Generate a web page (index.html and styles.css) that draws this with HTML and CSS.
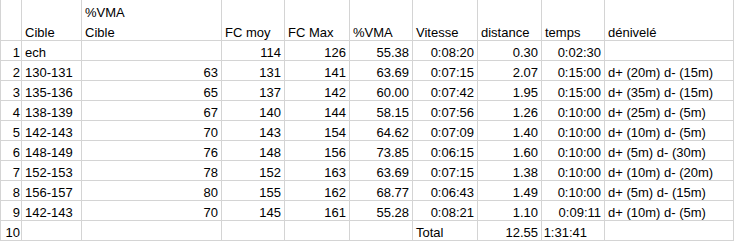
FILE: index.html
```html
<!DOCTYPE html>
<html>
<head>
<meta charset="utf-8">
<link rel="stylesheet" href="styles.css">
</head>
<body>
<div class="sheet">
  <div class="c n hd"></div>
  <div class="c hd">Cible</div>
  <div class="c hd"><div class="stack"><span class="ln">%VMA</span><span class="ln">Cible</span></div></div>
  <div class="c hd">FC moy</div>
  <div class="c hd">FC Max</div>
  <div class="c hd">%VMA</div>
  <div class="c hd">Vitesse</div>
  <div class="c hd">distance</div>
  <div class="c hd">temps</div>
  <div class="c hd">dénivelé</div>

  <div class="c n">1</div><div class="c">ech</div><div class="c r"></div><div class="c r">114</div><div class="c r">126</div><div class="c r">55.38</div><div class="c r">0:08:20</div><div class="c r">0.30</div><div class="c r">0:02:30</div><div class="c"></div>
  <div class="c n">2</div><div class="c">130-131</div><div class="c r">63</div><div class="c r">131</div><div class="c r">141</div><div class="c r">63.69</div><div class="c r">0:07:15</div><div class="c r">2.07</div><div class="c r">0:15:00</div><div class="c">d+ (20m) d- (15m)</div>
  <div class="c n">3</div><div class="c">135-136</div><div class="c r">65</div><div class="c r">137</div><div class="c r">142</div><div class="c r">60.00</div><div class="c r">0:07:42</div><div class="c r">1.95</div><div class="c r">0:15:00</div><div class="c">d+ (35m) d- (15m)</div>
  <div class="c n">4</div><div class="c">138-139</div><div class="c r">67</div><div class="c r">140</div><div class="c r">144</div><div class="c r">58.15</div><div class="c r">0:07:56</div><div class="c r">1.26</div><div class="c r">0:10:00</div><div class="c">d+ (25m) d- (5m)</div>
  <div class="c n">5</div><div class="c">142-143</div><div class="c r">70</div><div class="c r">143</div><div class="c r">154</div><div class="c r">64.62</div><div class="c r">0:07:09</div><div class="c r">1.40</div><div class="c r">0:10:00</div><div class="c">d+ (10m) d- (5m)</div>
  <div class="c n">6</div><div class="c">148-149</div><div class="c r">76</div><div class="c r">148</div><div class="c r">156</div><div class="c r">73.85</div><div class="c r">0:06:15</div><div class="c r">1.60</div><div class="c r">0:10:00</div><div class="c">d+ (5m) d- (30m)</div>
  <div class="c n">7</div><div class="c">152-153</div><div class="c r">78</div><div class="c r">152</div><div class="c r">163</div><div class="c r">63.69</div><div class="c r">0:07:15</div><div class="c r">1.38</div><div class="c r">0:10:00</div><div class="c">d+ (10m) d- (20m)</div>
  <div class="c n">8</div><div class="c">156-157</div><div class="c r">80</div><div class="c r">155</div><div class="c r">162</div><div class="c r">68.77</div><div class="c r">0:06:43</div><div class="c r">1.49</div><div class="c r">0:10:00</div><div class="c">d+ (5m) d- (15m)</div>
  <div class="c n">9</div><div class="c">142-143</div><div class="c r">70</div><div class="c r">145</div><div class="c r">161</div><div class="c r">55.28</div><div class="c r">0:08:21</div><div class="c r">1.10</div><div class="c r">0:09:11</div><div class="c">d+ (10m) d- (5m)</div>
  <div class="c n">10</div><div class="c"></div><div class="c r"></div><div class="c r"></div><div class="c r"></div><div class="c r"></div><div class="c">Total</div><div class="c r">12.55</div><div class="c r total-time">1:31:41</div><div class="c"></div>
</div>
</body>
</html>
```

FILE: styles.css
```css
html, body {
  margin: 0;
  padding: 0;
  background: #ffffff;
}

.sheet {
  display: grid;
  grid-template-columns: 20px 59px 139px 62px 64px 62px 64px 63px 62px 128px;
  grid-template-rows: 40px repeat(10, 19px);
  gap: 1px;
  padding: 0 1px 1px 1px;
  width: 732px;
  background: #d4d4d4;
  font-family: "Liberation Sans", Arial, sans-serif;
  font-size: 13px;
  color: #000000;
}

.c {
  background: #ffffff;
  display: flex;
  align-items: flex-end;
  padding: 0 2px 0 3px;
  line-height: 15px;
  white-space: nowrap;
  overflow: hidden;
}

.stack {
  display: flex;
  flex-direction: column;
  gap: 5px;
}

.r {
  justify-content: flex-end;
  padding-right: 3px;
}

.total-time {
  padding-right: 17px;
}

.n {
  justify-content: flex-end;
  padding: 0 1px 0 0;
}
```
